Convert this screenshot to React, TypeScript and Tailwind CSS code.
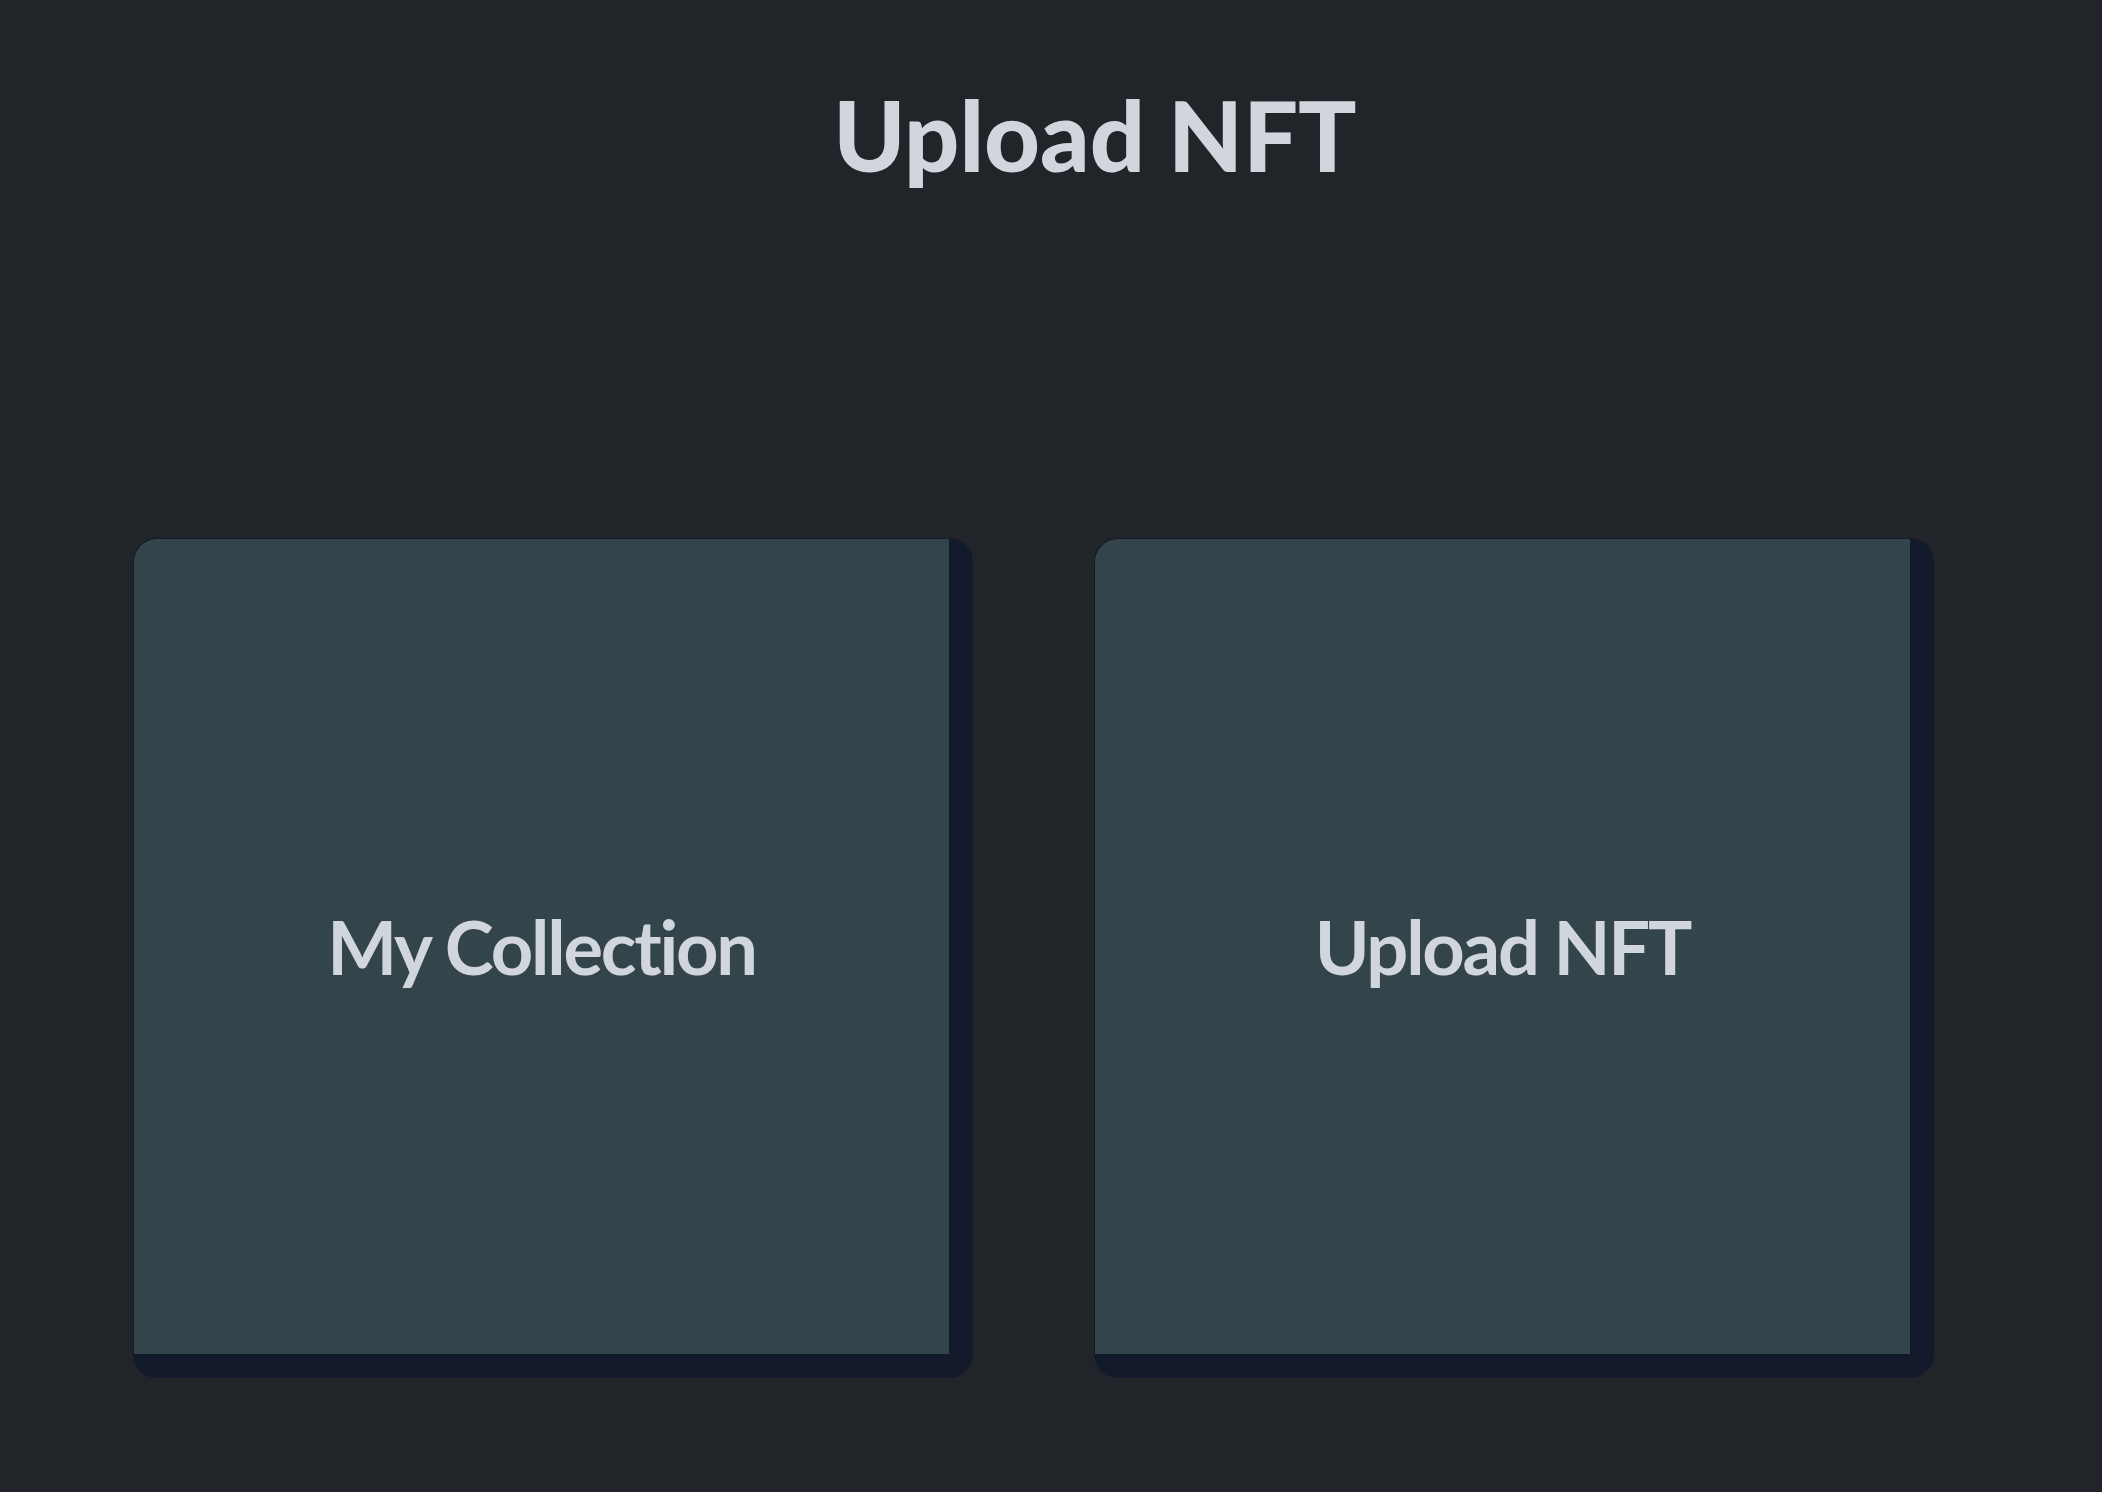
import React from 'react';

const Tile: React.FC<{ label: string }> = ({ label }) => (
    <button className="flex h-[840px] w-[840px] items-center justify-center rounded-3xl border border-r-[24px] border-b-[24px] border-[#131a2b] bg-[#33454b] text-[74px] font-bold tracking-[-0.03em] text-gray-300">
        {label}
    </button>
);

const App: React.FC = () => {
    return (
        <div className="min-h-screen bg-[#212429] font-['Lato',sans-serif]">
            {/* Header */}
            <h1 className="pt-[86px] pl-[88px] text-center text-[97px] font-black leading-none text-gray-300">
                Upload NFT
            </h1>

            {/* Actions */}
            <div className="mt-[355px] flex gap-[121px] pl-[133px]">
                <Tile label="My Collection" />
                <Tile label="Upload NFT" />
            </div>
        </div>
    );
};

export default App;
